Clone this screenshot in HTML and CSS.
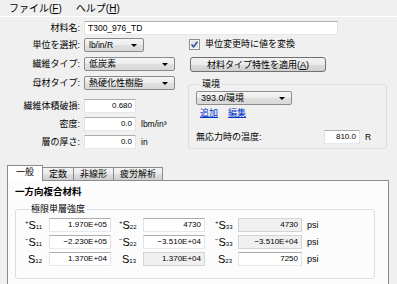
FILE: index.html
```html
<!DOCTYPE html>
<html lang="ja">
<head>
    <meta charset="UTF-8">
    <title>材料</title>
    <link rel="stylesheet" href="styles.css">
</head>
<body>
    <div class="menubar">
        <span>ファイル(<u>F</u>)</span>
        <span>ヘルプ(<u>H</u>)</span>
    </div>

    <div class="top">
        <div class="row">
            <label class="lbl">材料名:</label>
            <div class="input name">T300_976_TD</div>
        </div>

        <div class="cols">
            <div class="left">
                <div class="row">
                    <label class="lbl">単位を選択:</label>
                    <div class="combo unit">lb/in/R<i class="arrow"></i></div>
                </div>
                <div class="row">
                    <label class="lbl">繊維タイプ:</label>
                    <div class="combo type">低炭素<i class="arrow"></i></div>
                </div>
                <div class="row">
                    <label class="lbl">母材タイプ:</label>
                    <div class="combo type">熱硬化性樹脂<i class="arrow"></i></div>
                </div>
                <div class="nums">
                    <div class="row">
                        <label class="lbl">繊維体積破損:</label>
                        <div class="input num">0.680</div>
                    </div>
                    <div class="row">
                        <label class="lbl">密度:</label>
                        <div class="input num">0.0</div>
                        <span class="unit-txt">lbm/in³</span>
                    </div>
                    <div class="row">
                        <label class="lbl">層の厚さ:</label>
                        <div class="input num">0.0</div>
                        <span class="unit-txt">in</span>
                    </div>
                </div>
            </div>

            <div class="right">
                <div class="check-row">
                    <svg class="checkbox" width="11" height="11" viewBox="0 0 11 11">
                        <rect x="0.5" y="0.5" width="10" height="10" fill="#f4f4f4" stroke="#8e8f8f"/>
                        <rect x="2" y="2" width="7" height="7" fill="#dfe6ee"/>
                        <path d="M2.5 5.5 L4.5 7.8 L8.5 2.8" fill="none" stroke="#2d4e8a" stroke-width="1.4"/>
                    </svg>
                    <span>単位変更時に値を変換</span>
                </div>
                <button class="btn">材料タイプ特性を適用(<u>A</u>)</button>

                <fieldset class="group env">
                    <legend>環境</legend>
                    <div class="combo envsel">393.0/環境<i class="arrow"></i></div>
                    <div class="links">
                        <a href="#">追加</a>
                        <a href="#">編集</a>
                    </div>
                    <div class="temp-row">
                        <span class="temp-lbl">無応力時の温度:</span>
                        <div class="input temp">810.0</div>
                        <span class="unit-txt">R</span>
                    </div>
                </fieldset>
            </div>
        </div>
    </div>

    <div class="tabs">
        <div class="tab active">一般</div>
        <div class="tab">定数</div>
        <div class="tab">非線形</div>
        <div class="tab">疲労解析</div>
    </div>

    <div class="panel">
        <div class="panel-title">一方向複合材料</div>
        <fieldset class="group strength">
            <legend>極限単層強度</legend>
            <div class="grid">
                <span class="s-lbl"><sup>+</sup>S<sub>11</sub></span>
                <div class="input cell">1.970E+05</div>
                <span class="s-lbl mid"><sup>+</sup>S<sub>22</sub></span>
                <div class="input cell">4730</div>
                <span class="s-lbl last"><sup>+</sup>S<sub>33</sub></span>
                <div class="input cell off">4730</div>
                <span class="psi">psi</span>

                <span class="s-lbl"><sup>−</sup>S<sub>11</sub></span>
                <div class="input cell">−2.230E+05</div>
                <span class="s-lbl mid"><sup>−</sup>S<sub>22</sub></span>
                <div class="input cell">−3.510E+04</div>
                <span class="s-lbl last"><sup>−</sup>S<sub>33</sub></span>
                <div class="input cell off">−3.510E+04</div>
                <span class="psi">psi</span>

                <span class="s-lbl"><span class="pad">&nbsp;</span>S<sub>12</sub></span>
                <div class="input cell">1.370E+04</div>
                <span class="s-lbl mid"><span class="pad">&nbsp;</span>S<sub>13</sub></span>
                <div class="input cell off">1.370E+04</div>
                <span class="s-lbl last"><span class="pad">&nbsp;</span>S<sub>23</sub></span>
                <div class="input cell">7250</div>
                <span class="psi">psi</span>
            </div>
        </fieldset>
    </div>
</body>
</html>
```

FILE: styles.css
```css
body {
    margin: 0;
    width: 397px;
    height: 284px;
    overflow: hidden;
    background: #f0f0f0;
    color: #000;
    font-family: "Liberation Sans", "Noto Sans CJK JP", sans-serif;
    font-size: 9px;
    line-height: 11px;
}

/* menu */
.menubar {
    height: 16px;
    border-bottom: 1px solid #fff;
    display: flex;
    align-items: center;
    gap: 14px;
    padding-left: 9px;
    font-size: 10px;
}

/* top form */
.top {
    padding-top: 4px;
}

.row {
    display: flex;
    align-items: center;
    height: 14px;
}

.lbl {
    width: 80px;
    padding-right: 4px;
    text-align: right;
    white-space: nowrap;
}

.cols {
    display: flex;
    margin-top: 3px;
}

.left {
    width: 188px;
    display: flex;
    flex-direction: column;
    gap: 5px;
}

.nums {
    margin-top: 4px;
    display: flex;
    flex-direction: column;
    gap: 4px;
}

.nums .row {
    height: 14px;
}

.input {
    box-sizing: border-box;
    height: 14px;
    background: #fff;
    border: 1px solid #abadb3;
    border-color: #abadb3 #e2e3ea #e3e9ef #e2e3ea;
    padding: 0 3px;
    font-size: 8px;
    line-height: 12px;
    white-space: nowrap;
}

.input.name {
    width: 254px;
    font-size: 8.5px;
}

.input.num {
    width: 52px;
    text-align: right;
}

.unit-txt {
    margin-left: 5px;
    font-size: 8.5px;
}

.combo {
    position: relative;
    box-sizing: border-box;
    height: 14px;
    border: 1px solid #8b8b8b;
    border-radius: 2px;
    background: linear-gradient(#f5f5f5, #ececec 50%, #e0e0e0 51%, #d8d8d8);
    padding: 0 4px;
    line-height: 12px;
    white-space: nowrap;
}

.combo.unit {
    width: 60px;
    font-size: 8.5px;
}

.combo.type {
    width: 91px;
}

.arrow {
    position: absolute;
    right: 6px;
    top: 5px;
    width: 0;
    height: 0;
    border-left: 3px solid transparent;
    border-right: 3px solid transparent;
    border-top: 3px solid #000;
}

/* right column */
.right {
    flex: 1;
}

.check-row {
    height: 13px;
    display: flex;
    align-items: center;
    gap: 5px;
    padding-left: 1px;
}

.btn {
    display: block;
    box-sizing: border-box;
    margin: 6px 0 0 2px;
    width: 136px;
    height: 15px;
    padding: 0;
    border: 1px solid #707070;
    border-radius: 3px;
    background: linear-gradient(#f2f2f2, #ebebeb 50%, #dddddd 51%, #cfcfcf);
    font: inherit;
    line-height: 12px;
    color: #000;
}

.group {
    margin: 0;
    padding: 0;
    border: 1px solid #d5dfe5;
    border-radius: 3px;
    min-width: 0;
}

.group legend {
    padding: 0 2px;
    margin-left: 4px;
    line-height: 11px;
}

.env {
    box-sizing: border-box;
    width: 199px;
    height: 70px;
    margin-top: 7px;
    padding: 1px 7px 0 7px;
}

.combo.envsel {
    width: 96px;
}

.links {
    display: flex;
    gap: 10px;
    margin-top: 3px;
    padding-left: 4px;
    height: 11px;
}

.links a {
    color: #0033cc;
}

.temp-row {
    display: flex;
    align-items: center;
    margin-top: 11px;
}

.temp-lbl {
    width: 128px;
    white-space: nowrap;
}

.input.temp {
    width: 36px;
    text-align: right;
}

/* tabs */
.tabs {
    display: flex;
    align-items: flex-end;
    margin-top: 15px;
    padding-left: 7px;
    height: 16px;
}

.tab {
    box-sizing: border-box;
    height: 13px;
    border: 1px solid #898c95;
    border-bottom: none;
    margin-left: -1px;
    background: linear-gradient(#f2f2f2, #ebebeb 50%, #dddddd 51%, #cfcfcf);
    padding: 0 6px;
    line-height: 12px;
    white-space: nowrap;
}

.tab.active {
    height: 16px;
    margin-left: 0;
    margin-bottom: -1px;
    background: #fff;
    position: relative;
    padding: 0 8px;
    line-height: 13px;
}

.panel {
    box-sizing: border-box;
    margin-left: 7px;
    width: 382px;
    height: 110px;
    background: #fcfcfc;
    border: 1px solid #898c95;
    padding: 4px 7px 0;
}

.panel-title {
    font-weight: bold;
    font-size: 9.5px;
    line-height: 13px;
}

.strength {
    box-sizing: border-box;
    width: 360px;
    height: 75px;
    margin-top: 6px;
    padding: 3px 0 0 9px;
}

.grid {
    display: grid;
    grid-template-columns: 24px 62px 32px 62px 33px 64px auto;
    row-gap: 3px;
    align-items: center;
}

.s-lbl {
    font-size: 11px;
    white-space: nowrap;
}

.s-lbl.mid {
    padding-left: 8px;
}

.s-lbl.last {
    padding-left: 10px;
}

.s-lbl sup,
.s-lbl sub,
.s-lbl .pad {
    font-size: 6px;
    line-height: 0;
}

.s-lbl sup {
    vertical-align: 5px;
}

.s-lbl sub {
    vertical-align: 0;
}

.s-lbl .pad {
    display: inline-block;
    width: 3px;
}

.input.cell {
    text-align: right;
}

.input.off {
    background: #f0f0f0;
    border-color: #d4d4d4;
}

.psi {
    padding-left: 5px;
}
```
